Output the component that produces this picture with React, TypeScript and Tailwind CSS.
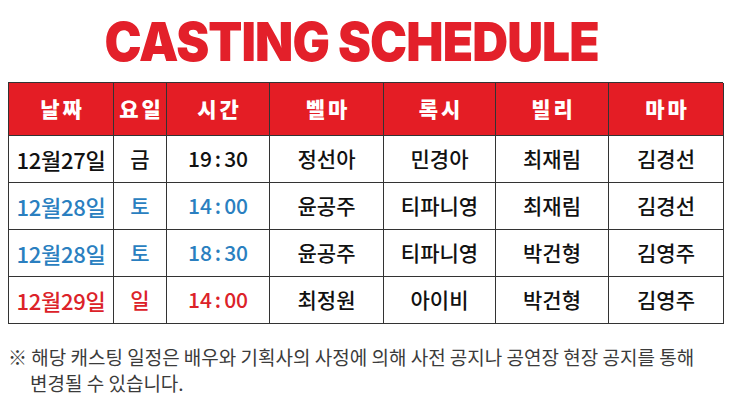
const KR = { fontFamily: '"Noto Sans CJK KR", "Noto Sans", sans-serif' };

type Row = {
  date: string;
  day: string;
  time: string;
  cast: string[];
  tone: "black" | "blue" | "red";
};

const rows: Row[] = [
  { date: "12월27일", day: "금", time: "19:30", cast: ["정선아", "민경아", "최재림", "김경선"], tone: "black" },
  { date: "12월28일", day: "토", time: "14:00", cast: ["윤공주", "티파니영", "최재림", "김경선"], tone: "blue" },
  { date: "12월28일", day: "토", time: "18:30", cast: ["윤공주", "티파니영", "박건형", "김영주"], tone: "blue" },
  { date: "12월29일", day: "일", time: "14:00", cast: ["최정원", "아이비", "박건형", "김영주"], tone: "red" },
];

const toneClass = {
  black: "text-[#111111]",
  blue: "text-[#2a7fc0]",
  red: "text-[#dc2229]",
};

const heads = ["날짜", "요일", "시간", "벨마", "록시", "빌리", "마마"];

const App = () => {
  return (
    <div className="w-[732px] h-[402px] bg-white overflow-hidden" style={KR}>
      <div className="h-[82px] flex items-center justify-center pr-[28px] pt-[1px]">
        <h1
          className="text-[54px] font-black text-[#e3202a] tracking-[-1px] leading-none"
          style={{ fontFamily: "Inter, sans-serif", transform: "scaleX(0.92)" }}
        >
          CASTING SCHEDULE
        </h1>
      </div>

      <div className="ml-[8px] w-[715px] grid grid-cols-[105px_53px_103px_114px_112px_113px_115px] border-l border-t border-[#333333]">
        {heads.map((h) => (
          <div
            key={h}
            className="h-[53px] bg-[#e41d25] border-r border-b border-[#333333] flex items-center justify-center text-white text-[21px] font-black tracking-[3px] pl-[3px]"
          >
            {h}
          </div>
        ))}
        {rows.map((r, i) => {
          const tc = toneClass[r.tone];
          return [
            <div
              key={`${i}-d`}
              className={`h-[47px] border-r border-b border-[#333333] flex items-center justify-center text-[22px] font-medium tracking-[-0.3px] ${tc}`}
            >
              {r.date}
            </div>,
            <div
              key={`${i}-w`}
              className={`h-[47px] border-r border-b border-[#333333] flex items-center justify-center text-[21px] font-medium ${tc}`}
            >
              {r.day}
            </div>,
            <div
              key={`${i}-t`}
              className={`h-[47px] border-r border-b border-[#333333] flex items-center justify-center text-[21px] font-medium ${tc}`}
            >
              {r.time.split(":")[0]}
              <span className="mx-[3px]">:</span>
              {r.time.split(":")[1]}
            </div>,
            ...r.cast.map((c, j) => (
              <div
                key={`${i}-c${j}`}
                className="h-[47px] border-r border-b border-[#333333] flex items-center justify-center text-[21px] font-medium text-[#111111]"
              >
                {c}
              </div>
            )),
          ];
        })}
      </div>

      <div className="mt-[20px] pl-[8px] text-[19px] leading-[26px] text-[#3b3b3b]">
        <p>※ 해당 캐스팅 일정은 배우와 기획사의 사정에 의해 사전 공지나 공연장 현장 공지를 통해</p>
        <p className="pl-[22px]">변경될 수 있습니다.</p>
      </div>
    </div>
  );
};

export default App;
